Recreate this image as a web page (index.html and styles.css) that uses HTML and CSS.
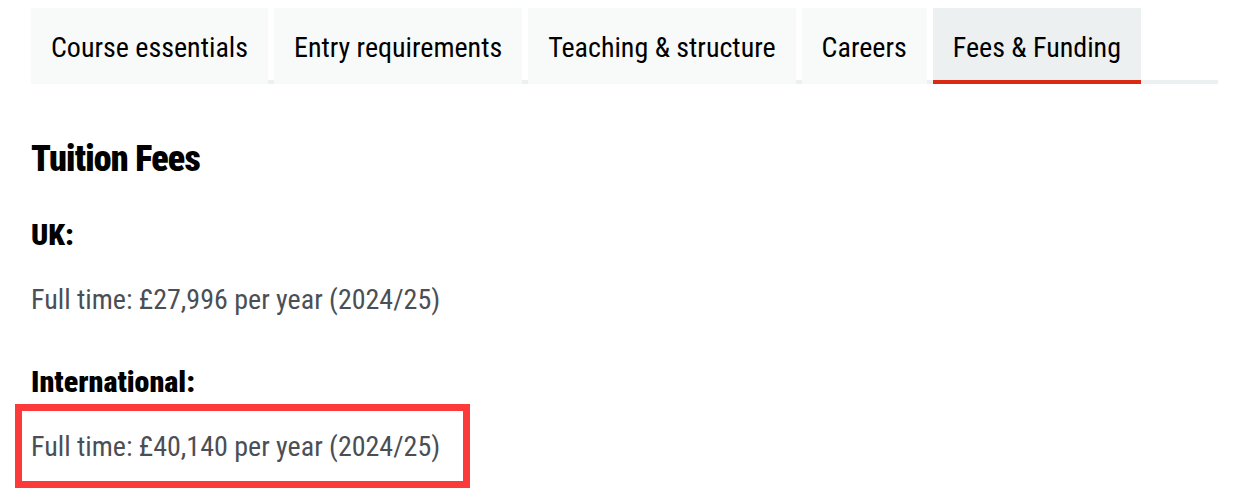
FILE: index.html
```html
<html>

<head>
  <link rel="stylesheet" href="styles.css">
</head>

<body>
  <div id="course">
    <div class="tabs">
      <button class="tab">Course essentials</button>
      <button class="tab">Entry requirements</button>
      <button class="tab">Teaching &amp; structure</button>
      <button class="tab">Careers</button>
      <button class="tab active">Fees &amp; Funding</button>
    </div>
    <div class="panel">
      <h2>Tuition Fees</h2>
      <h3>UK:</h3>
      <p>Full time: £27,996 per year (2024/25)</p>
      <h3 class="intl">International:</h3>
      <p class="marked">Full time: £40,140 per year (2024/25)</p>
    </div>
  </div>
</body>

</html>
```

FILE: styles.css
```css
body {
  margin: 0;
  padding: 0;
  background: #fff;
  font-family: 'Roboto Condensed', 'Roboto', sans-serif;
  font-stretch: 75%;
}

#course {
  width: 1187px;
  padding: 8px 0 0 31px;
}

.tabs {
  display: flex;
  gap: 6px;
  border-bottom: solid 4px #edf0f0;
}

.tab {
  flex: none;
  white-space: nowrap;
  font-family: inherit;
  font-stretch: inherit;
  font-size: 28px;
  line-height: 64px;
  color: #000;
  background: #f8fafa;
  border: none;
  height: 76px;
  padding: 8px 20px 0 20px;
  margin-bottom: -4px;
  border-bottom: solid 4px transparent;
  box-sizing: border-box;
}

.tab.active {
  background: #edf0f0;
  border-bottom-color: #da2a14;
}

.panel h2 {
  font-size: 36px;
  font-weight: 900;
  letter-spacing: -0.8px;
  line-height: 44px;
  margin: 53px 0 36px 0;
  color: #000;
}

.panel h3 {
  font-size: 30px;
  font-weight: 900;
  line-height: 36px;
  margin: 0 0 30px 0;
  color: #000;
}

.panel p {
  font-size: 28px;
  line-height: 34px;
  margin: 0 0 47px 0;
  color: #4b4f55;
}

.panel h3.intl {
  margin-bottom: 4px;
}

.panel p.marked {
  display: inline-block;
  margin: 0 0 0 -16px;
  padding: 19px 23px 17px 9px;
  border: solid 7px #fc3a3a;
}
```
